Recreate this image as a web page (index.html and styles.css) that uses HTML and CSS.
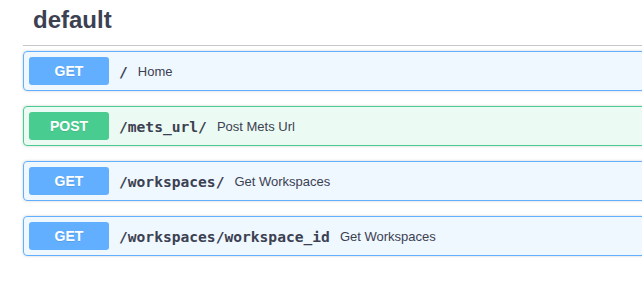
FILE: index.html
```html
<!DOCTYPE html>
<html lang="en">
<head>
    <meta charset="UTF-8">
    <title>default</title>
    <link rel="stylesheet" href="styles.css">
</head>
<body>
    <div class="wrapper">
        <div class="tag-section">
            <h4 class="opblock-tag">default</h4>
            <div class="opblock opblock-get">
                <div class="summary">
                    <span class="method">GET</span>
                    <span class="path">/</span>
                    <span class="desc">Home</span>
                </div>
            </div>
            <div class="opblock opblock-post">
                <div class="summary">
                    <span class="method">POST</span>
                    <span class="path">/mets_url/</span>
                    <span class="desc">Post Mets Url</span>
                </div>
            </div>
            <div class="opblock opblock-get">
                <div class="summary">
                    <span class="method">GET</span>
                    <span class="path">/workspaces/</span>
                    <span class="desc">Get Workspaces</span>
                </div>
            </div>
            <div class="opblock opblock-get">
                <div class="summary">
                    <span class="method">GET</span>
                    <span class="path">/workspaces/workspace_id</span>
                    <span class="desc">Get Workspaces</span>
                </div>
            </div>
        </div>
    </div>
</body>
</html>
```

FILE: styles.css
```css
* {
    margin: 0;
    padding: 0;
    box-sizing: border-box;
}
html, body {
    overflow: hidden;
    background: #fff;
}
body {
    font-family: "Liberation Sans", Arial, sans-serif;
    color: #3b4151;
}
.wrapper {
    padding: 0 0 0 23px;
    width: 700px;
}
.opblock-tag {
    font-size: 24px;
    font-weight: bold;
    padding: 6px 10px 11px 10px;
    margin-bottom: 5px;
    border-bottom: 1px solid rgba(59, 65, 81, 0.3);
    color: #3b4151;
}
.opblock {
    border: 1px solid #000;
    border-radius: 4px;
    margin-bottom: 15px;
    box-shadow: 0 0 3px rgba(0, 0, 0, 0.19);
}
.summary {
    display: flex;
    align-items: center;
    padding: 5px;
}
.method {
    display: inline-block;
    min-width: 80px;
    height: 28px;
    line-height: 28px;
    text-align: center;
    font-size: 14px;
    font-weight: bold;
    color: #fff;
    border-radius: 3px;
    text-shadow: 0 1px 0 rgba(0, 0, 0, 0.1);
}
.path {
    font-family: "DejaVu Sans Mono", monospace;
    font-size: 14.6px;
    font-weight: bold;
    padding: 0 10px;
    color: #3b4151;
}
.desc {
    font-size: 13px;
    color: #3b4151;
}
.opblock-get {
    background: rgba(97, 175, 254, 0.1);
    border-color: #61affe;
}
.opblock-get .method {
    background: #61affe;
}
.opblock-post {
    background: rgba(73, 204, 144, 0.1);
    border-color: #49cc90;
}
.opblock-post .method {
    background: #49cc90;
}
```
